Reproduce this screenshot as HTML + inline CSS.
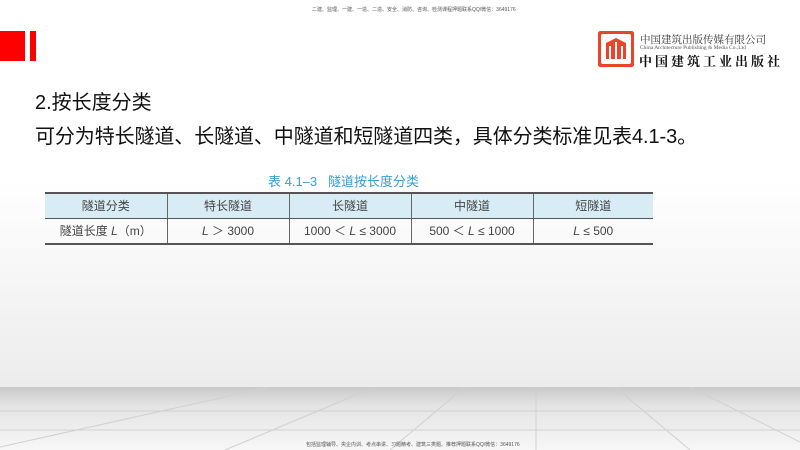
<!DOCTYPE html>
<html><head><meta charset="utf-8"><style>
*{margin:0;padding:0;box-sizing:border-box}
body{width:800px;height:450px;overflow:hidden;position:relative;font-family:"Liberation Sans","Noto Sans CJK SC",sans-serif;background:linear-gradient(#fff 0%,#fff 40%,#ececec 86%);}
.floor{position:absolute;left:0;top:387px;width:800px;height:63px;background:linear-gradient(#c9c9c9,#e4e4e4 30%,#f7f7f7);}
.t1{position:absolute;left:35px;top:86px;font-size:20px;color:#111}
.t2{position:absolute;left:35px;top:120px;font-size:20px;color:#111;white-space:nowrap;letter-spacing:-0.1px}
.cap{position:absolute;left:268px;top:171px;font-size:13px;color:#3b9dd0}
table{position:absolute;left:45px;top:192px;width:608px;border-collapse:collapse;font-size:12px;color:#444}
td{border-left:1px solid #666;text-align:center;height:25px}
td:first-child{border-left:none}
tr.h td{background:#d8ecf6;border-top:2px solid #555;border-bottom:1px solid #555}
tr.d td{border-bottom:2px solid #555;height:26px}
.sm{position:absolute;font-size:5px;color:#555}
</style></head><body>
<div style="position:absolute;left:0;top:31px;width:25px;height:30px;background:#f00"></div>
<div style="position:absolute;left:30px;top:31px;width:6px;height:30px;background:#f00"></div>
<div class="sm" style="left:312px;top:6px">二建、监理、一建、一造、二造、安全、消防、咨询、检测课程押题联系QQ/微信：3649176</div>
<svg style="position:absolute;left:598px;top:31px" width="36" height="36" viewBox="0 0 36 36"><rect x="1" y="1" width="34" height="34" rx="4" fill="none" stroke="#e8462a" stroke-width="4"/><path d="M8 28V12l10-5 10 5v16" fill="#e8462a"/><path d="M12 28V15M18 28V11M24 28V15" stroke="#fff" stroke-width="2"/></svg>
<div style="position:absolute;left:640px;top:32px;font-size:10.5px;color:#333;font-family:'Noto Serif CJK SC',serif">中国建筑出版传媒有限公司</div>
<div style="position:absolute;left:640px;top:45px;font-size:5.5px;color:#555;font-family:'Liberation Serif',serif">China Architecture Publishing &amp; Media Co.,Ltd</div>
<div style="position:absolute;left:639px;top:51px;font-size:13px;color:#111;font-weight:bold;letter-spacing:3px;font-family:'Noto Serif CJK SC',serif">中国建筑工业出版社</div>
<div class="t1">2.按长度分类</div>
<div class="t2">可分为特长隧道、长隧道、中隧道和短隧道四类，具体分类标准见表4.1-3。</div>
<div class="cap">表 4.1–3&nbsp;&nbsp;&nbsp;隧道按长度分类</div>
<table>
<tr class="h"><td style="width:122px">隧道分类</td><td style="width:122px">特长隧道</td><td style="width:122px">长隧道</td><td style="width:122px">中隧道</td><td>短隧道</td></tr>
<tr class="d"><td>隧道长度 <i>L</i>（m）</td><td><i>L</i> ＞ 3000</td><td>1000 ＜ <i>L</i> ≤ 3000</td><td>500 ＜ <i>L</i> ≤ 1000</td><td><i>L</i> ≤ 500</td></tr>
</table>
<div class="floor"></div>
<svg style="position:absolute;left:0;top:387px" width="800" height="63"><g stroke="#d0d0d0" stroke-width="1" fill="none"><line x1="0" y1="24" x2="800" y2="24"/><line x1="0" y1="43" x2="800" y2="43"/><line x1="536" y1="0" x2="536" y2="63"/><line x1="465" y1="0" x2="390" y2="63"/><line x1="375" y1="0" x2="225" y2="63"/><line x1="270" y1="0" x2="0" y2="60"/><line x1="615" y1="0" x2="690" y2="63"/><line x1="690" y1="0" x2="800" y2="55"/></g></svg>
<div class="sm" style="left:306px;top:441px">包括监理辅导、央企内训、考点串讲、习题精考、建筑三类题、推荐押题联系QQ/微信：3649176</div>
</body></html>
